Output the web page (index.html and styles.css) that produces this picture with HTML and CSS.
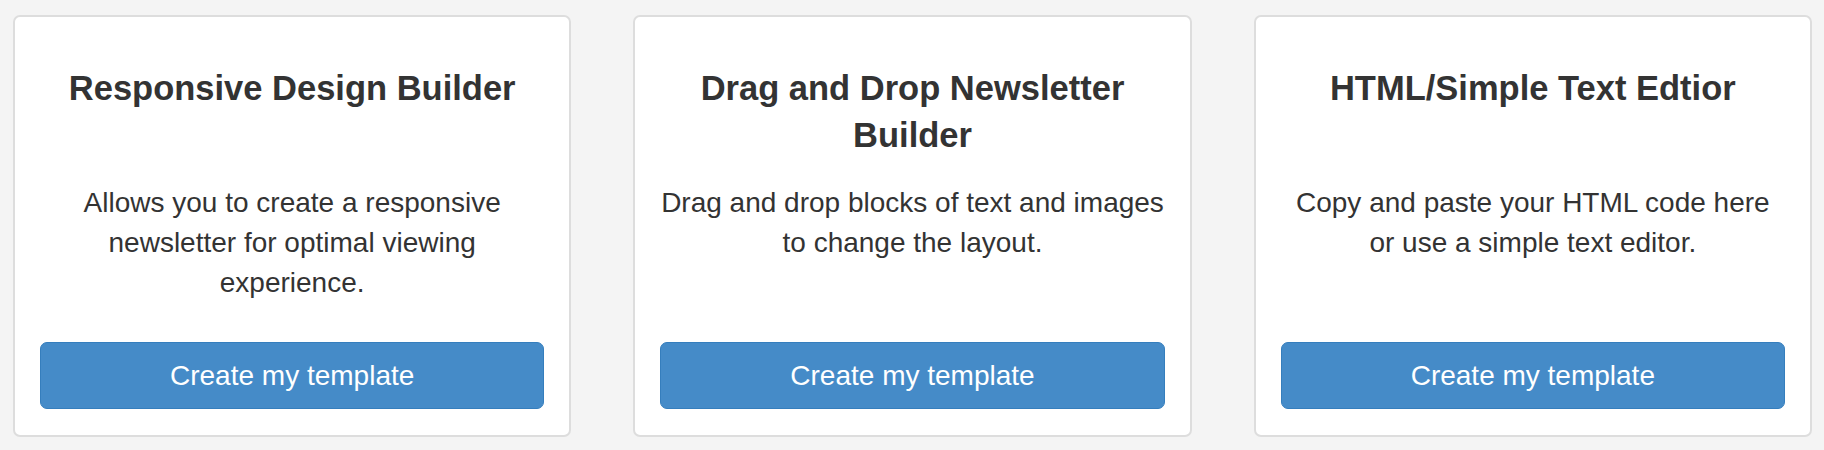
FILE: index.html
```html
<!DOCTYPE html>
<html lang="en">
<head>
    <meta charset="UTF-8">
    <meta name="viewport" content="width=device-width, initial-scale=1.0">
    <title>Choose a template</title>
    <link rel="stylesheet" href="styles.css">
</head>
<body>
    <div class="builders">
        <div class="builder-card">
            <h3 class="builder-title">Responsive Design Builder</h3>
            <p class="builder-desc">Allows you to create a responsive newsletter for optimal viewing experience.</p>
            <button class="btn-create">Create my template</button>
        </div>
        <div class="builder-card">
            <h3 class="builder-title">Drag and Drop Newsletter Builder</h3>
            <p class="builder-desc">Drag and drop blocks of text and images to change the layout.</p>
            <button class="btn-create">Create my template</button>
        </div>
        <div class="builder-card">
            <h3 class="builder-title">HTML/Simple Text Edtior</h3>
            <p class="builder-desc">Copy and paste your HTML code here or use a simple text editor.</p>
            <button class="btn-create">Create my template</button>
        </div>
    </div>
</body>
</html>
```

FILE: styles.css
```css
body {
    margin: 0;
    background-color: #f4f4f4;
    font-family: "Liberation Sans", Arial, Helvetica, sans-serif;
    color: #333333;
}
.builders {
    display: flex;
    gap: 62px;
    padding: 15px 12px 13px 13px;
}
.builder-card {
    flex: 1;
    display: flex;
    flex-direction: column;
    background-color: #ffffff;
    border: 2px solid #dddddd;
    border-radius: 7px;
    padding: 48px 25px 26px;
    text-align: center;
}
.builder-title {
    margin: 0 0 24px;
    min-height: 94px;
    font-size: 34.5px;
    font-weight: bold;
    line-height: 47px;
}
.builder-desc {
    margin: 0 0 39px;
    min-height: 120px;
    font-size: 28px;
    line-height: 40px;
}
.btn-create {
    margin-top: auto;
    height: 67px;
    border: 1px solid #357ebd;
    border-radius: 7px;
    background-color: #458bc8;
    color: #ffffff;
    font-family: inherit;
    font-size: 28px;
    cursor: pointer;
}
.btn-create:hover {
    background-color: #3071a9;
}
```
